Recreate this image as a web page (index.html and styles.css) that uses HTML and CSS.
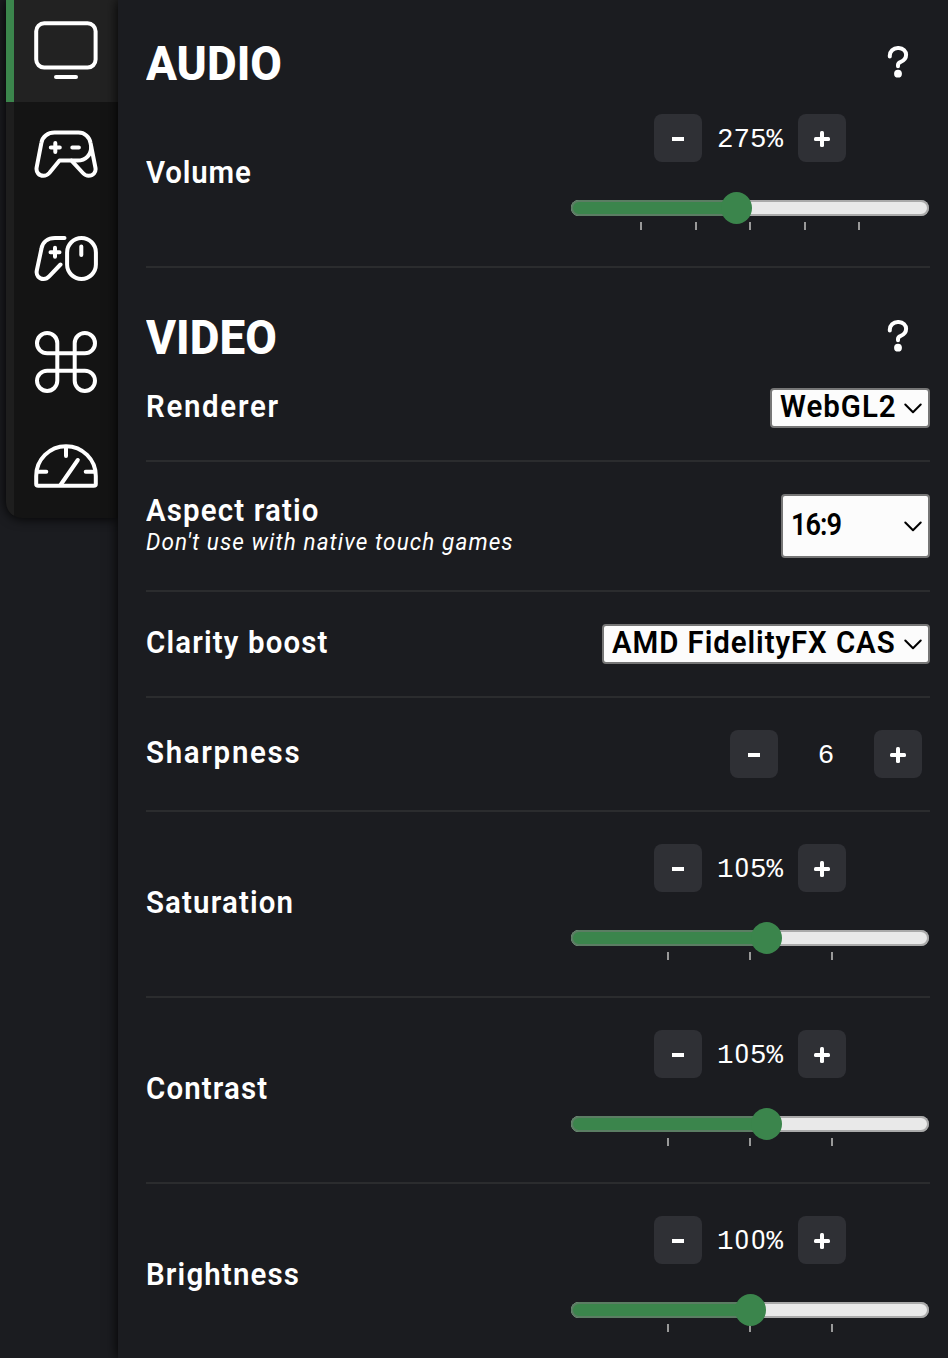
FILE: index.html
```
<!DOCTYPE html>
<html lang="en">
<head>
<meta charset="utf-8">
<title>Stream settings</title>
<link rel="stylesheet" href="styles.css">
</head>
<body>
<div class="dialog">
  <nav class="tabs">
    <a class="tab active"><svg viewBox="0 0 32 32"><rect x="1.1" y="2.1" width="29.7" height="22.2" rx="4"/><path d="M11 29h10"/></svg></a>
    <a class="tab"><svg viewBox="0 0 64 64"><path d="M20.5 10.500h24c6 0 11 4.300 12 10.300l4.900 24.700c1 5-2.400 8.300-6.800 8.300-2.300 0-4-1-5.700-2.800L37.500 38.600H25.500L15.300 51c-1.700 1.800-3.500 2.800-5.800 2.800-4.500 0-7.800-3.600-6.800-8.600l4.700-24.400c1-6 6.500-10.300 13.100-10.300z"/><path d="M37.500 38.600h6c8.200 0 14-6 13.600-14"/><path d="M21.300 21v9M16.800 25.500h9M38.300 25.500h6.600"/></svg></a>
    <a class="tab"><svg viewBox="0 0 64 64"><path d="M30.500 12H21C14 12 8.600 16 7.500 22.500L2.800 44.500c-1 5 2.300 8.500 6.800 8.500 2.300 0 4.100-1.100 5.800-2.900L26.500 38.500"/><rect x="33.100" y="12" width="28.800" height="41" rx="14.400"/><path d="M47.300 20.500v8.500M21 21.800v9M16.500 26.300h9"/></svg></a>
    <a class="tab"><svg viewBox="0 0 64 64"><path d="M23.300 23.300V13.150A10.150 10.150 0 1 0 13.150 23.300h37.700A10.150 10.150 0 1 0 40.700 13.150v37.700A10.150 10.150 0 1 0 50.850 40.700H13.150A10.150 10.150 0 1 0 23.300 50.850z"/></svg></a>
    <a class="tab"><svg viewBox="0 0 64 64"><path d="M2.200 50V42a29.800 29.800 0 0 1 59.600 0v8c0 1.200-.8 1.800-2 1.800H4.200c-1.200 0-2-.6-2-1.800z"/><path d="M32 13.500V22M3 37.700h9.300M61 37.700h-9.300M26.500 51l17.300-25"/></svg></a>
  </nav>
  <main class="panel">
    <header class="heading heading-first"><h2>AUDIO</h2><svg class="help" viewBox="0 0 24 34"><path d="M3.800 12.500v-1C3.800 7.300 7.300 4 11.800 4h1c4.400 0 7.300 3.300 7.300 6.800 0 4.500-3.200 6.300-5.800 7.300-1.500.6-2.300 1.500-2.300 3v1.100"/><circle cx="12" cy="29.700" r="3.900"/></svg></header>
    <section class="row row-slider">
      <label class="tight">Volume</label>
      <div class="control">
        <div class="stepper"><button><i class="minus"></i></button><output>275%</output><button><i class="plus"></i></button></div>
        <div class="slider"><div class="fill" style="width:165px"></div><div class="thumb" style="left:165px"></div></div>
        <div class="ticks five"><i></i><i></i><i></i><i></i><i></i></div>
      </div>
    </section>

    <header class="heading"><h2>VIDEO</h2><svg class="help" viewBox="0 0 24 34"><path d="M3.800 12.500v-1C3.800 7.300 7.300 4 11.800 4h1c4.400 0 7.300 3.300 7.300 6.800 0 4.500-3.200 6.300-5.800 7.300-1.500.6-2.300 1.500-2.300 3v1.100"/><circle cx="12" cy="29.700" r="3.900"/></svg></header>
    <section class="row">
      <label class="wide">Renderer</label>
      <div class="select renderer"><span>WebGL2</span><svg viewBox="0 0 18 11"><path d="M1.300 1.500L9 9.200l7.700-7.700"/></svg></div>
    </section>
    <section class="row">
      <label class="with-note">Aspect ratio<small>Don't use with native touch games</small></label>
      <div class="select ratio"><span>16:9</span><svg viewBox="0 0 18 11"><path d="M1.300 1.500L9 9.200l7.700-7.700"/></svg></div>
    </section>
    <section class="row">
      <label>Clarity boost</label>
      <div class="select clarity"><span>AMD FidelityFX CAS</span><svg viewBox="0 0 18 11"><path d="M1.300 1.500L9 9.200l7.700-7.700"/></svg></div>
    </section>
    <section class="row">
      <label class="wide">Sharpness</label>
      <div class="stepper inset"><button><i class="minus"></i></button><output>6</output><button><i class="plus"></i></button></div>
    </section>
    <section class="row row-slider">
      <label>Saturation</label>
      <div class="control">
        <div class="stepper"><button><i class="minus"></i></button><output>1<span class="zero">0</span>5%</output><button><i class="plus"></i></button></div>
        <div class="slider"><div class="fill" style="width:195px"></div><div class="thumb" style="left:195px"></div></div>
        <div class="ticks"><i></i><i></i><i></i></div>
      </div>
    </section>
    <section class="row row-slider">
      <label>Contrast</label>
      <div class="control">
        <div class="stepper"><button><i class="minus"></i></button><output>1<span class="zero">0</span>5%</output><button><i class="plus"></i></button></div>
        <div class="slider"><div class="fill" style="width:195px"></div><div class="thumb" style="left:195px"></div></div>
        <div class="ticks"><i></i><i></i><i></i></div>
      </div>
    </section>
    <section class="row row-slider">
      <label>Brightness</label>
      <div class="control">
        <div class="stepper"><button><i class="minus"></i></button><output>1<span class="zero">0</span><span class="zero">0</span>%</output><button><i class="plus"></i></button></div>
        <div class="slider"><div class="fill" style="width:179px"></div><div class="thumb" style="left:179px"></div></div>
        <div class="ticks"><i></i><i></i><i></i></div>
      </div>
    </section>
  </main>
</div>
</body>
</html>
```
FILE: styles.css
```
* { box-sizing: border-box; }
body { margin: 0; background: #1b1c20; color: #fff; font-family: Roboto, "Open Sans", sans-serif; }
.dialog { display: flex; height: 1358px; overflow: hidden; }

.tabs { width: 112px; height: 518px; margin-left: 6px; flex: none; background: #141414; border-bottom-left-radius: 16px; overflow: hidden; box-shadow: 0 0 12px #000; }
.tab { display: flex; align-items: center; justify-content: center; height: 104px; border-left: 8px solid #1e1e1e; }
.tab.active { height: 102px; background: #222; border-color: #3b854c; }
.tab svg { width: 64px; height: 64px; fill: none; stroke: #fff; stroke-width: 4; stroke-linecap: round; stroke-linejoin: round; }
.tab.active svg { stroke-width: 2; }

.panel { flex: 1; padding: 0 18px 0 28px; background: #1b1c20; box-shadow: 0 0 12px #000; }
.heading { display: flex; justify-content: space-between; align-items: center; height: 102px; margin-top: 18px; padding-right: 20px; }
.heading-first { margin-top: 12px; }
h2 { margin: 1px 0 0; font-size: 49px; line-height: 56px; font-weight: 800; transform: scaleX(.935); transform-origin: left; }
.help { width: 24px; height: 34px; margin-bottom: 4px; fill: none; stroke: #fff; stroke-width: 4; stroke-linecap: round; }
.help circle { fill: #fff; stroke: none; }

.row { display: flex; justify-content: space-between; align-items: center; padding: 32px 0; border-bottom: 2px solid #2b2c2e; }
.row-slider { padding-bottom: 36px; }
.heading + .row { padding-top: 0; }
label { display: block; font-size: 32px; line-height: 36px; font-weight: 600; letter-spacing: 1.25px; margin-bottom: 4px; white-space: nowrap; transform: scaleX(.92); transform-origin: left; }
.row-slider label { margin-bottom: 1px; }
label.tight { letter-spacing: .9px; }
label.wide { letter-spacing: 1.85px; }
label.with-note { line-height: 32px; margin-bottom: 0; }
label small { display: block; font-size: 24.5px; line-height: 32px; font-weight: 400; font-style: italic; letter-spacing: 1.18px; }

.control { width: 360px; }
.stepper { display: flex; justify-content: center; align-items: center; }
.stepper.inset { padding-right: 8px; }
.stepper button { width: 48px; height: 48px; padding: 2px 0 0; border: 0; border-radius: 8px; background: #2f3035; display: grid; place-items: center; }
.minus { width: 12px; height: 4px; background: #fff; }
.plus { display: grid; place-items: center; width: 16px; height: 16px; }
.plus::before, .plus::after { content: ""; grid-area: 1 / 1; border-radius: 1.5px; background: #fff; }
.plus::before { width: 16px; height: 4px; }
.plus::after { width: 4px; height: 16px; }
output { width: 96px; height: 48px; padding-top: 2px; text-align: center; font: 27.5px/48px "Liberation Mono", monospace; }
.zero { display: inline-block; width: 16.5px; line-height: 1; text-align: center; font-family: Roboto, sans-serif; font-size: 26px; font-weight: 400; }
.slider { position: relative; height: 16px; margin: 38px 1px 6px; border-radius: 8px; background: #e9e9e9; }
.slider::after { content: ""; position: absolute; inset: 0; border: 2px solid rgba(118, 118, 118, .55); border-radius: 8px; }
.fill { height: 16px; border-radius: 8px 0 0 8px; background: #3b854c; }
.thumb { position: absolute; z-index: 1; top: -8px; width: 31px; height: 32px; margin-left: -15.5px; border-radius: 50%; background: #3b854c; }
.ticks { display: flex; justify-content: space-between; padding: 0 97px; }
.ticks.five { padding: 0 70px; }
.ticks i { width: 2px; height: 8px; background: #999; }

.select { display: flex; justify-content: space-between; align-items: center; height: 40px; padding: 0 6px 0 8px; background: #fcfcfc; border: 2px solid #767676; border-radius: 4px; color: #000; }
.select span { font-size: 32px; line-height: 36px; font-weight: 600; letter-spacing: 1.1px; margin-bottom: 4px; white-space: nowrap; transform: scaleX(.92); transform-origin: left; }
.select svg { flex: none; width: 18px; height: 11px; fill: none; stroke: #000; stroke-width: 2; stroke-linecap: round; stroke-linejoin: round; }
.select.renderer { width: 160px; }
.select.renderer span { width: 115px; }
.select.clarity { width: 328px; }
.select.clarity span { width: 284px; letter-spacing: 1px; }
.select.ratio { width: 149px; height: 64px; }
.select.ratio span { transform: scaleX(.85); letter-spacing: -1.2px; }
```
